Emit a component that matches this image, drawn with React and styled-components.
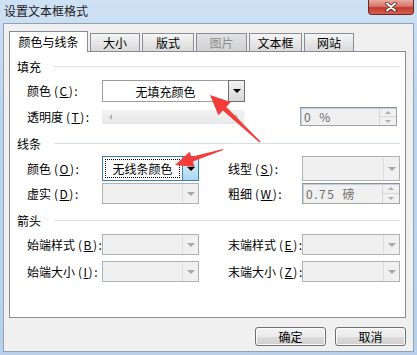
import React from 'react';
import styled, { createGlobalStyle, css } from 'styled-components';

const FONT = `"Noto Sans CJK SC", "Liberation Sans", sans-serif`;

const GlobalStyle = createGlobalStyle`
  html, body {
    margin: 0;
    padding: 0;
    background: #ffffff;
  }
  body {
    font-family: ${FONT};
    font-size: 12px;
    color: #000;
  }
`;

const Window = styled.div`
  position: relative;
  width: 417px;
  height: 355px;
  box-sizing: border-box;
  padding: 0 3px 3px 3px;
  display: flex;
  flex-direction: column;
  background: linear-gradient(#cfe1f4, #bcd4ed 30%, #b9d1ea);
  overflow: hidden;
`;

const TitleBar = styled.div`
  height: 23px;
  display: flex;
  align-items: flex-start;
  justify-content: space-between;
`;

const Title = styled.div`
  padding: 3px 0 0 1px;
  font-size: 12px;
  line-height: 16px;
  color: #1b1b1b;
`;

const CloseButton = styled.div`
  width: 46px;
  height: 15px;
  box-sizing: border-box;
  border: 1px solid #6d2722;
  border-top: none;
  border-radius: 0 0 4px 4px;
  background: linear-gradient(#e9aaa0, #d7766a 45%, #c23b2e 55%, #d66052);
  display: flex;
  align-items: center;
  justify-content: center;
`;

const Client = styled.div`
  flex: 1;
  display: flex;
  flex-direction: column;
  background: #f0f0f0;
  border: 1px solid #8fa3b8;
  padding: 7px 7px 0 5px;
`;

const TabRow = styled.div`
  display: flex;
  align-items: flex-end;
  gap: 2px;
  height: 20px;
`;

const Tab = styled.div`
  position: relative;
  width: ${p => p.$w}px;
  box-sizing: border-box;
  border: 1px solid #898c95;
  border-bottom: none;
  display: flex;
  align-items: center;
  justify-content: center;
  font-size: 12px;
  color: ${p => (p.$disabled ? '#8d8d8d' : '#000')};
  ${p =>
    p.$active
      ? css`
          height: 21px;
          margin-bottom: -1px;
          background: #ffffff;
          z-index: 1;
          padding-bottom: 1px;
        `
      : css`
          height: 18px;
          background: ${p.$disabled
            ? 'linear-gradient(#e2e2e2, #d2d2d2)'
            : 'linear-gradient(#f6f6f6, #e6e6e6 50%, #dadada)'};
        `}
`;

const Panel = styled.div`
  height: 267px;
  box-sizing: border-box;
  background: #ffffff;
  border: 1px solid #898c95;
  padding: 7px 5px 0 0;
  display: flex;
  flex-direction: column;
`;

const Section = styled.div`
  display: flex;
  flex-direction: column;
  margin-top: ${p => p.$mt || 0}px;
`;

const SectionHeader = styled.div`
  height: 14px;
  display: flex;
  align-items: center;
  padding-left: 7px;
  font-size: 12px;

  &::after {
    content: '';
    flex: 1;
    height: 1px;
    margin-left: 13px;
    background: #d5dfe5;
  }
`;

const Rows = styled.div`
  display: flex;
  flex-direction: column;
  gap: ${p => p.$gap}px;
  padding-top: ${p => p.$pt}px;
`;

const Row = styled.div`
  display: grid;
  grid-template-columns: ${p => p.$cols};
  align-items: center;
  height: ${p => p.$h}px;
  padding-left: 17px;
`;

const Label = styled.span`
  font-size: 12px;
  white-space: nowrap;
  line-height: 14px;
`;

const Key = styled.span`
  margin-left: 3px;
  letter-spacing: 1.5px;

  u {
    text-underline-offset: 1px;
  }
`;

const Combo = styled.div`
  height: 100%;
  box-sizing: border-box;
  display: flex;
  border: 1px solid;
  ${p =>
    p.$state === 'disabled' &&
    css`
      border-color: #adb2b5;
      background: #f0f0f0;
    `}
  ${p =>
    p.$state === 'normal' &&
    css`
      border-color: #9d9d9d;
      background: #ffffff;
    `}
  ${p =>
    p.$state === 'focus' &&
    css`
      border-color: #3c7fb1;
      background: #ffffff;
    `}
`;

const ComboText = styled.div`
  flex: 1;
  display: flex;
  align-items: center;
  justify-content: center;
  font-size: 12px;
  white-space: nowrap;
`;

const FocusText = styled.div`
  flex: 1;
  margin: 2px;
  border: 1px dotted #000;
  display: flex;
  align-items: center;
  justify-content: center;
  font-size: 12px;
  white-space: nowrap;
`;

const ComboButton = styled.div`
  width: 15px;
  display: flex;
  align-items: center;
  justify-content: center;
  ${p =>
    p.$state === 'disabled' &&
    css`
      border-left: 1px solid #dedede;
    `}
  ${p =>
    p.$state === 'normal' &&
    css`
      margin: -1px -1px -1px 0;
      border: 1px solid #707070;
      background: linear-gradient(#f3f3f3, #e5e5e5 50%, #d9d9d9);
    `}
  ${p =>
    p.$state === 'focus' &&
    css`
      margin: -1px -1px -1px 0;
      border: 1px solid #3c7fb1;
      background: linear-gradient(#e5f4fc, #c4e5f6 50%, #a9d9f2);
    `}
`;

const Tri = styled.span`
  width: 0;
  height: 0;
  border-left: ${p => p.$size}px solid transparent;
  border-right: ${p => p.$size}px solid transparent;
  ${p =>
    p.$dir === 'up'
      ? css`border-bottom: ${p.$size}px solid ${p.$color};`
      : p.$dir === 'left'
      ? css`
          border-left: none;
          border-top: ${p.$size}px solid transparent;
          border-bottom: ${p.$size}px solid transparent;
          border-right: ${p.$size}px solid ${p.$color};
        `
      : p.$dir === 'right'
      ? css`
          border-right: none;
          border-top: ${p.$size}px solid transparent;
          border-bottom: ${p.$size}px solid transparent;
          border-left: ${p.$size}px solid ${p.$color};
        `
      : css`border-top: ${p.$size}px solid ${p.$color};`}
`;

const Slider = styled.div`
  height: 14px;
  box-sizing: border-box;
  background: linear-gradient(#f2f2f2, #e8e8e8);
  display: flex;
  align-items: center;
  justify-content: space-between;
  padding: 0 6px 0 7px;
`;

const Spin = styled.div`
  height: 100%;
  box-sizing: border-box;
  display: flex;
  border: 1px solid #a3a3a3;
  border-top-color: #8f8f8f;
  background: #f0f0f0;
  box-shadow: inset 1px 1px 0 #b8d2ec;
`;

const SpinValue = styled.div`
  flex: 1;
  display: flex;
  align-items: center;
  padding-left: 3px;
  font-size: 12px;
  letter-spacing: 1.5px;
  word-spacing: 3px;
  color: #6d6d6d;
  white-space: nowrap;
`;

const SpinButtons = styled.div`
  width: 16px;
  display: flex;
  flex-direction: column;
  border-left: 1px solid #d6d6d6;
`;

const SpinHalf = styled.div`
  flex: 1;
  display: flex;
  align-items: center;
  justify-content: center;
  & + & {
    border-top: 1px solid #d6d6d6;
  }
`;

const Footer = styled.div`
  display: flex;
  justify-content: flex-end;
  gap: 9px;
  margin-top: 9px;
`;

const Button = styled.div`
  width: 71px;
  height: 19px;
  box-sizing: border-box;
  border: 1px solid #707070;
  border-radius: 3px;
  background: linear-gradient(#f2f2f2, #ebebeb 50%, #dddddd 51%, #cfcfcf);
  box-shadow: inset 0 0 0 1px #fbfbfb;
  display: flex;
  align-items: center;
  justify-content: center;
  font-size: 12px;
`;

const Overlay = styled.svg`
  position: absolute;
  left: 0;
  top: 0;
  width: 417px;
  height: 355px;
  pointer-events: none;
  z-index: 5;
`;

const tabs = [
  { name: '颜色与线条', w: 79, active: true },
  { name: '大小', w: 50 },
  { name: '版式', w: 52 },
  { name: '图片', w: 51, disabled: true },
  { name: '文本框', w: 53 },
  { name: '网站', w: 50 },
];

const FieldLabel = ({ text, k }) => (
  <Label>
    {text}
    <Key>
      (<u>{k}</u>):
    </Key>
  </Label>
);

const DisabledCombo = () => (
  <Combo $state="disabled">
    <ComboText />
    <ComboButton $state="disabled">
      <Tri $size={4} $color="#a8a8a8" />
    </ComboButton>
  </Combo>
);

const SpinBox = ({ value }) => (
  <Spin>
    <SpinValue>{value}</SpinValue>
    <SpinButtons>
      <SpinHalf>
        <Tri $dir="up" $size={3} $color="#b0b0b0" />
      </SpinHalf>
      <SpinHalf>
        <Tri $size={3} $color="#b0b0b0" />
      </SpinHalf>
    </SpinButtons>
  </Spin>
);

const LINE_COLS = '75px 97px 29px 74px 98px';

const App = () => {
  return (
    <>
      <GlobalStyle />
      <Window>
        <TitleBar>
          <Title>设置文本框格式</Title>
          <CloseButton>
            <svg width="12" height="10" viewBox="0 0 12 10">
              <path d="M2 1.5 L10 8.5 M10 1.5 L2 8.5" stroke="#4a2420" strokeWidth="3.6" strokeLinecap="round" />
              <path d="M2 1.5 L10 8.5 M10 1.5 L2 8.5" stroke="#ffffff" strokeWidth="2" strokeLinecap="round" />
            </svg>
          </CloseButton>
        </TitleBar>

        <Client>
          <TabRow>
            {tabs.map(t => (
              <Tab key={t.name} $w={t.w} $active={t.active} $disabled={t.disabled}>
                {t.name}
              </Tab>
            ))}
          </TabRow>

          <Panel>
            <Section>
              <SectionHeader>填充</SectionHeader>
              <Rows $gap={5} $pt={7}>
                <Row $cols="75px 143px" $h={22}>
                  <FieldLabel text="颜色" k="C" />
                  <Combo $state="normal">
                    <ComboText>无填充颜色</ComboText>
                    <ComboButton $state="normal">
                      <Tri $size={4} $color="#000" />
                    </ComboButton>
                  </Combo>
                </Row>
                <Row $cols="75px 142px 56px 97px" $h={16}>
                  <FieldLabel text="透明度" k="T" />
                  <Slider>
                    <Tri $dir="left" $size={3} $color="#b4b4b4" />
                    <Tri $dir="right" $size={3} $color="#b4b4b4" />
                  </Slider>
                  <span />
                  <SpinBox value="0 %" />
                </Row>
              </Rows>
            </Section>

            <Section $mt={13}>
              <SectionHeader>线条</SectionHeader>
              <Rows $gap={6} $pt={6}>
                <Row $cols={LINE_COLS} $h={21}>
                  <FieldLabel text="颜色" k="O" />
                  <Combo $state="focus">
                    <FocusText>无线条颜色</FocusText>
                    <ComboButton $state="focus">
                      <Tri $size={4} $color="#000" />
                    </ComboButton>
                  </Combo>
                  <span />
                  <FieldLabel text="线型" k="S" />
                  <DisabledCombo />
                </Row>
                <Row $cols={LINE_COLS} $h={21}>
                  <FieldLabel text="虚实" k="D" />
                  <DisabledCombo />
                  <span />
                  <FieldLabel text="粗细" k="W" />
                  <SpinBox value="0.75 磅" />
                </Row>
              </Rows>
            </Section>

            <Section $mt={9}>
              <SectionHeader>箭头</SectionHeader>
              <Rows $gap={6} $pt={7}>
                <Row $cols={LINE_COLS} $h={21}>
                  <FieldLabel text="始端样式" k="B" />
                  <DisabledCombo />
                  <span />
                  <FieldLabel text="末端样式" k="E" />
                  <DisabledCombo />
                </Row>
                <Row $cols={LINE_COLS} $h={21}>
                  <FieldLabel text="始端大小" k="I" />
                  <DisabledCombo />
                  <span />
                  <FieldLabel text="末端大小" k="Z" />
                  <DisabledCombo />
                </Row>
              </Rows>
            </Section>
          </Panel>

          <Footer>
            <Button>确定</Button>
            <Button>取消</Button>
          </Footer>
        </Client>

        <Overlay viewBox="0 0 417 355">
          <polygon
            points="260.5,141.5 226.3,106.9 230.8,102.1 210,95 218.4,115.3 222.9,110.5 259.5,142.5"
            fill="#f23d3a"
          />
          <polygon
            points="223,149 191.5,156.8 189.6,151.7 175,165 194.6,166.9 192.8,161.6 223.2,150"
            fill="#f23d3a"
          />
        </Overlay>
      </Window>
    </>
  );
};

export default App;
